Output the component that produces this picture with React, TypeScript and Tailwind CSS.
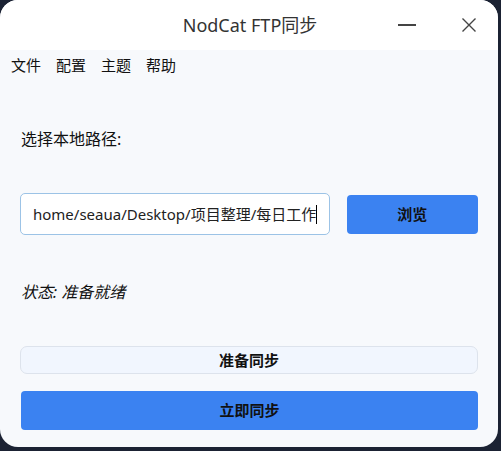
const App = () => {
  return (
    <div className="w-[501px] h-[451px] bg-[#1b2233] overflow-hidden" style={{ fontFamily: '"Noto Sans", "Noto Sans CJK SC", sans-serif' }}>
      <div className="w-[498px] h-[447px] bg-[#f7f9fc] rounded-[18px] overflow-hidden flex flex-col">
        {/* Title bar */}
        <div className="h-[50px] bg-white flex items-center relative shrink-0">
          <div className="flex-1 text-center text-[18px] text-[#333] pl-[2px]">NodCat FTP同步</div>
          <div className="absolute left-[398px] top-[24px] w-[18px] h-[1.5px] bg-[#444]" />
          <svg className="absolute left-[461px] top-[17px]" width="16" height="16" viewBox="0 0 16 16">
            <path d="M1.5 1.5 L14.5 14.5 M14.5 1.5 L1.5 14.5" stroke="#444" strokeWidth="1.4" />
          </svg>
        </div>
        {/* Menu bar */}
        <div className="h-[30px] flex items-center gap-[15px] pl-[11px] text-[15px] text-[#111]">
          <span>文件</span>
          <span>配置</span>
          <span>主题</span>
          <span>帮助</span>
        </div>
        <div className="px-[20px] flex flex-col">
          <div className="mt-[48px] text-[16px] text-[#111] pl-[1px] leading-[22px]">选择本地路径:</div>
          <div className="mt-[43px] flex gap-[17px] items-center">
            <div className="w-[311px] h-[42px] bg-white border border-[#9cc3e6] rounded-[5px] flex items-center pl-[12px] text-[15px] text-[#222]">
              <span>home/seaua/Desktop/项目整理/每日工作</span>
              <span className="w-px h-[19px] bg-black" />
            </div>
            <button className="w-[132px] h-[39px] bg-[#3b82f1] rounded-[4px] text-[15px] font-bold text-[#111]">浏览</button>
          </div>
          <div className="mt-[46px] text-[16px] italic text-[#111] pl-[1px] leading-[22px]">状态: 准备就绪</div>
          <div className="mt-[43px] h-[28px] bg-[#f1f6fe] border border-[#dde3ec] rounded-[7px] flex items-center justify-center text-[15px] font-bold text-[#111]">准备同步</div>
          <button className="mt-[17px] h-[39px] bg-[#3b82f1] rounded-[4px] text-[15px] font-bold text-[#111] ml-[1px]">立即同步</button>
        </div>
      </div>
    </div>
  );
};

export default App;
